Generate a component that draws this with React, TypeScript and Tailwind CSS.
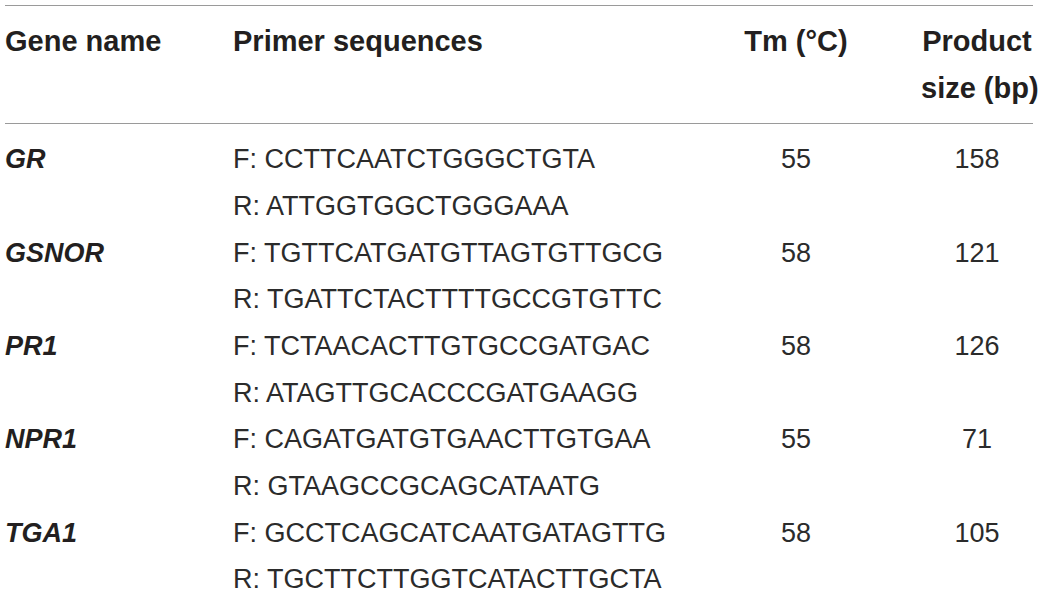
import React from "react";

const rows = [
  { gene: "GR", f: "F: CCTTCAATCTGGGCTGTA", r: "R: ATTGGTGGCTGGGAAA", tm: "55", size: "158" },
  { gene: "GSNOR", f: "F: TGTTCATGATGTTAGTGTTGCG", r: "R: TGATTCTACTTTTGCCGTGTTC", tm: "58", size: "121" },
  { gene: "PR1", f: "F: TCTAACACTTGTGCCGATGAC", r: "R: ATAGTTGCACCCGATGAAGG", tm: "58", size: "126" },
  { gene: "NPR1", f: "F: CAGATGATGTGAACTTGTGAA", r: "R: GTAAGCCGCAGCATAATG", tm: "55", size: "71" },
  { gene: "TGA1", f: "F: GCCTCAGCATCAATGATAGTTG", r: "R: TGCTTCTTGGTCATACTTGCTA", tm: "58", size: "105" },
];

export default function App() {
  return (
    <div className="w-[1039px] h-[602px] overflow-hidden bg-white text-[#231f20] font-['Liberation_Sans',Arial,sans-serif]">
      <div className="ml-[5px] mt-[5px] w-[1028px] border-t border-[#9a9a9a]">
        <div className="grid grid-cols-[228px_438px_250px_112px] pt-[12px] pb-[12px] border-b border-[#9a9a9a] font-bold text-[29px] leading-[46.67px]">
          <div>Gene name</div>
          <div>Primer sequences</div>
          <div className="text-center">Tm (°C)</div>
          <div className="text-center whitespace-nowrap">
            <div>Product</div>
            <div>size (bp)</div>
          </div>
        </div>
        <div className="pt-[12px] text-[27px] leading-[46.67px] text-[#2b2b2b]">
          {rows.map((r) => (
            <div key={r.gene} className="grid grid-cols-[228px_438px_250px_112px]">
              <div className="font-bold italic text-[#231f20]">{r.gene}</div>
              <div className="whitespace-nowrap">
                <div>{r.f}</div>
                <div>{r.r}</div>
              </div>
              <div className="text-center">{r.tm}</div>
              <div className="text-center">{r.size}</div>
            </div>
          ))}
        </div>
      </div>
    </div>
  );
}
